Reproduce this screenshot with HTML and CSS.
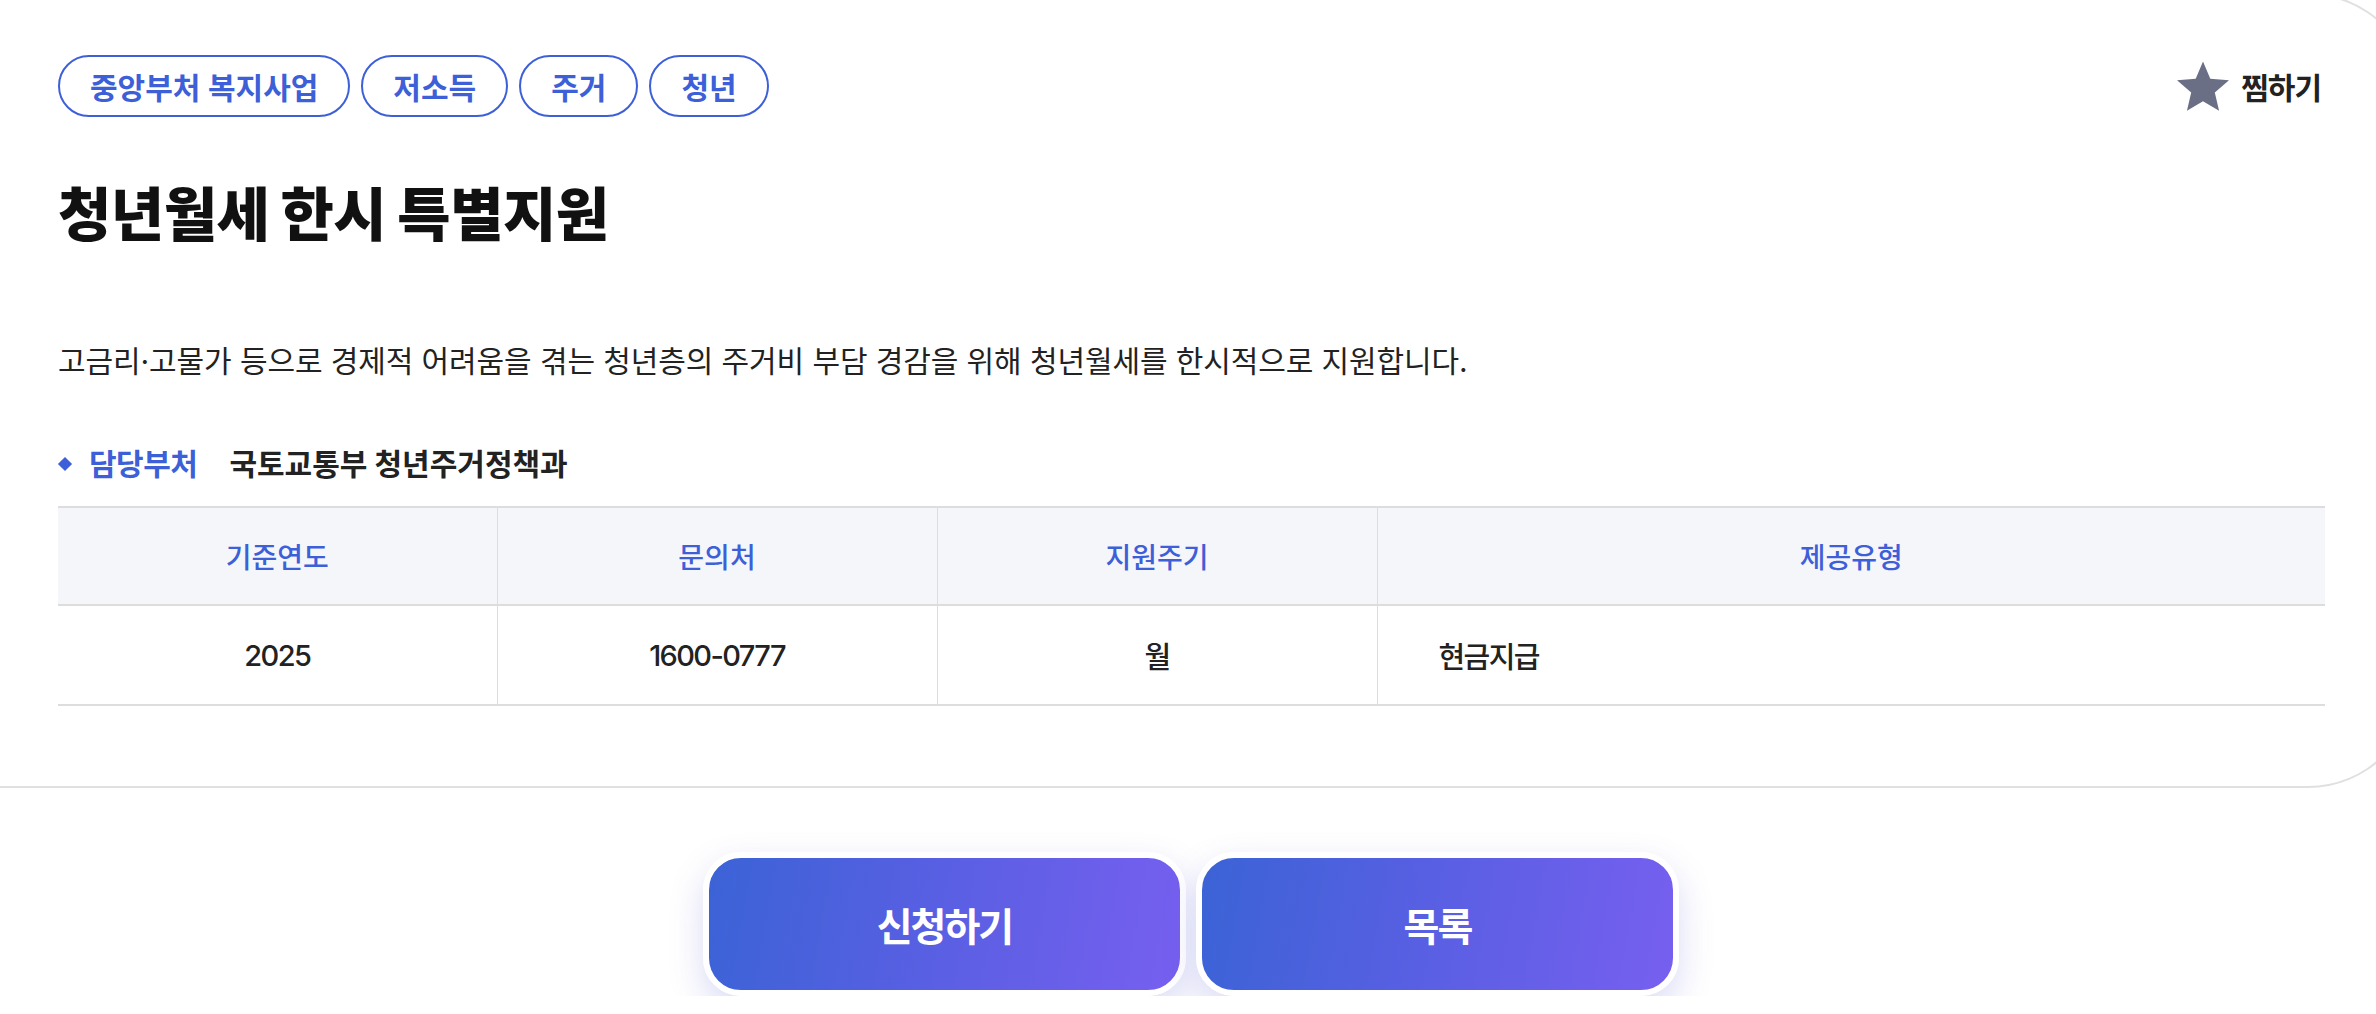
FILE: index.html
```html
<!DOCTYPE html>
<html lang="ko">
<head>
<meta charset="utf-8">
<title>청년월세 한시 특별지원</title>
<link rel="stylesheet" href="styles.css">
</head>
<body>
<main class="page">
  <section class="card">
    <div class="card-top">
      <ul class="tags">
        <li class="tag">중앙부처 복지사업</li>
        <li class="tag">저소득</li>
        <li class="tag">주거</li>
        <li class="tag">청년</li>
      </ul>
      <button class="fav" type="button">
        <svg class="fav-icon" viewBox="2 2 20 19.27" aria-hidden="true"><path d="M12 17.27L18.18 21l-1.64-7.03L22 9.24l-7.19-.61L12 2 9.19 8.63 2 9.24l5.46 4.73L5.82 21z"/></svg>
        <span>찜하기</span>
      </button>
    </div>
    <h1 class="title">청년월세 한시 특별지원</h1>
    <p class="desc">고금리·고물가 등으로 경제적 어려움을 겪는 청년층의 주거비 부담 경감을 위해 청년월세를 한시적으로 지원합니다.</p>
    <dl class="dept">
      <dt>담당부처</dt>
      <dd>국토교통부 청년주거정책과</dd>
    </dl>
    <table class="info">
      <colgroup>
        <col class="c1"><col class="c2"><col class="c3"><col class="c4">
      </colgroup>
      <thead>
        <tr><th>기준연도</th><th>문의처</th><th>지원주기</th><th>제공유형</th></tr>
      </thead>
      <tbody>
        <tr><td>2025</td><td>1600-0777</td><td>월</td><td class="left">현금지급</td></tr>
      </tbody>
    </table>
  </section>
  <div class="actions">
    <a class="btn" href="#">신청하기</a>
    <a class="btn" href="#">목록</a>
  </div>
</main>
</body>
</html>
```
FILE: styles.css
```css
html, body {
  margin: 0;
  padding: 0;
  overflow: hidden;
  background: #ffffff;
}
body {
  font-family: "Inter", "Noto Sans CJK KR", "Noto Sans", sans-serif;
  color: #222222;
}
.card {
  margin: -7px -40px 0 0;
  border: 2px solid #e0e0e0;
  border-left: 0;
  border-radius: 0 108px 108px 0;
  padding: 60px 89px 80px 58px;
}
.card-top {
  display: flex;
  justify-content: space-between;
  align-items: center;
}
.tags {
  display: flex;
  gap: 11px;
  list-style: none;
  margin: 0;
  padding: 0;
}
.tag {
  height: 62px;
  box-sizing: border-box;
  border: 2px solid #3d5fd8;
  border-radius: 31px;
  padding: 0 30px;
  display: flex;
  align-items: center;
  font-size: 30px;
  font-weight: 600;
  color: #3d5fd8;
  letter-spacing: 0;
}
.fav {
  display: flex;
  align-items: center;
  gap: 12px;
  background: none;
  border: 0;
  padding: 0;
  margin-right: 4px;
  font-family: inherit;
  font-size: 30px;
  font-weight: 700;
  color: #222222;
  letter-spacing: -1px;
}
.fav-icon {
  width: 52px;
  height: 51px;
  fill: #6b6f86;
}
.title {
  margin: 60px 0 0;
  font-size: 58px;
  line-height: 76px;
  font-weight: 900;
  color: #111111;
  letter-spacing: -0.5px;
}
.desc {
  margin: 86px 0 0;
  font-size: 30px;
  line-height: 44px;
  letter-spacing: -0.1px;
  color: #222222;
}
.dept {
  margin: 61px 0 0;
  display: flex;
  align-items: center;
  line-height: 40px;
}
.dept dt {
  display: flex;
  align-items: center;
  gap: 19px;
  font-size: 30px;
  font-weight: 700;
  color: #3d5fd8;
  letter-spacing: -0.5px;
}
.dept dt::before {
  content: "";
  width: 10px;
  height: 10px;
  margin-left: 2px;
  background: #3d5fd8;
  transform: rotate(45deg);
}
.dept dd {
  margin: 0 0 0 32px;
  font-size: 30px;
  font-weight: 700;
  color: #222222;
}
.info {
  width: 100%;
  margin-top: 22px;
  border-collapse: collapse;
  table-layout: fixed;
  border-top: 2px solid #dddddd;
}
.c1 { width: 439px; }
.c2 { width: 440px; }
.c3 { width: 440px; }
.info th {
  height: 96px;
  padding: 0;
  background: #f5f6fa;
  color: #3d5fd8;
  font-size: 28px;
  font-weight: 500;
  letter-spacing: 0;
  border-bottom: 2px solid #dddddd;
  border-left: 1px solid #dddddd;
}
.info td {
  height: 98px;
  padding: 0;
  text-align: center;
  font-size: 29px;
  font-weight: 500;
  color: #222222;
  letter-spacing: -1.6px;
  border-bottom: 2px solid #dddddd;
  border-left: 1px solid #dddddd;
}
.info th:first-child,
.info td:first-child {
  border-left: 0;
}
.info td.left {
  text-align: left;
  padding-left: 61px;
}
.actions {
  display: flex;
  justify-content: center;
  gap: 10px;
  margin-top: 64px;
  padding-left: 6px;
}
.btn {
  width: 483px;
  height: 144px;
  box-sizing: border-box;
  border: 6px solid #ffffff;
  border-radius: 38px;
  background: linear-gradient(100deg, #3b63d6 0%, #5a5fe3 50%, #775ff0 100%);
  color: #ffffff;
  font-size: 39px;
  font-weight: 700;
  letter-spacing: -2px;
  display: flex;
  align-items: center;
  justify-content: center;
  box-shadow: 0 14px 34px rgba(88, 92, 210, 0.22);
  text-decoration: none;
}
```
